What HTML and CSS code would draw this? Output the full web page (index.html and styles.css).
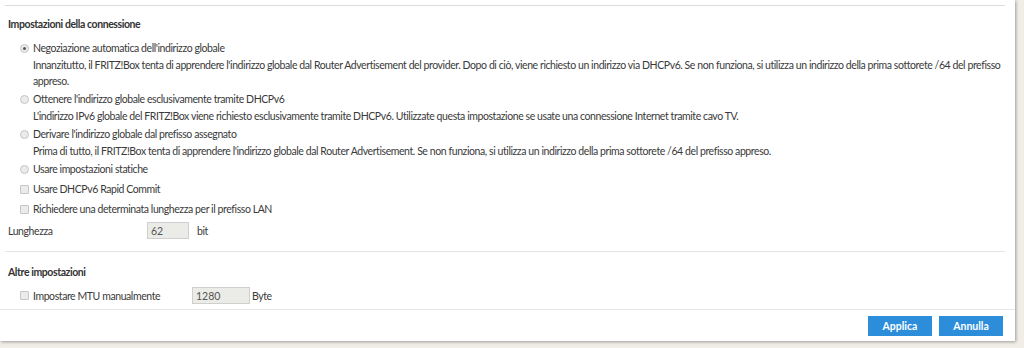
FILE: index.html
```html
<!DOCTYPE html>
<html>

<head>
    <meta charset="utf-8">
    <link rel="stylesheet" href="styles.css">
</head>

<body>
    <div class="panel">
        <div class="content">
            <hr class="top_rule">

            <h4 class="section_title">Impostazioni della connessione</h4>

            <div class="option">
                <label class="choice"><span class="radio checked"></span>Negoziazione automatica dell'indirizzo globale</label>
                <p class="hint">Innanzitutto, il FRITZ!Box tenta di apprendere l'indirizzo globale dal Router Advertisement del provider. Dopo di ciò, viene richiesto un indirizzo via DHCPv6. Se non funziona, si utilizza un indirizzo della prima sottorete /64 del prefisso appreso.</p>
            </div>
            <div class="option">
                <label class="choice"><span class="radio"></span>Ottenere l'indirizzo globale esclusivamente tramite DHCPv6</label>
                <p class="hint">L'indirizzo IPv6 globale del FRITZ!Box viene richiesto esclusivamente tramite DHCPv6. Utilizzate questa impostazione se usate una connessione Internet tramite cavo TV.</p>
            </div>
            <div class="option">
                <label class="choice"><span class="radio"></span>Derivare l'indirizzo globale dal prefisso assegnato</label>
                <p class="hint">Prima di tutto, il FRITZ!Box tenta di apprendere l'indirizzo globale dal Router Advertisement. Se non funziona, si utilizza un indirizzo della prima sottorete /64 del prefisso appreso.</p>
            </div>
            <div class="option">
                <label class="choice"><span class="radio"></span>Usare impostazioni statiche</label>
            </div>
            <div class="option">
                <label class="choice"><span class="check"></span>Usare DHCPv6 Rapid Commit</label>
            </div>
            <div class="option">
                <label class="choice"><span class="check"></span>Richiedere una determinata lunghezza per il prefisso LAN</label>
            </div>
            <div class="field_row">
                <span class="field_label">Lunghezza</span>
                <input class="field_input short" type="text" value="62" disabled>
                <span class="unit">bit</span>
            </div>

            <hr class="mid_rule">

            <h4 class="section_title other_title">Altre impostazioni</h4>
            <div class="field_row mtu_row">
                <label class="choice mtu_label"><span class="check"></span>Impostare MTU manualmente</label>
                <input class="field_input wide" type="text" value="1280" disabled>
                <span class="unit">Byte</span>
            </div>
        </div>

        <div class="footer">
            <button class="base_button">Applica</button>
            <button class="base_button">Annulla</button>
        </div>
    </div>
</body>

</html>
```

FILE: styles.css
```css
html,
body {
    margin: 0;
    padding: 0;
    background: #f1ede7;
}

body {
    font-family: "Lato", "Liberation Sans", sans-serif;
    font-size: 10.5px;
    letter-spacing: -0.42px;
    color: #3a3a3a;
    width: 1024px;
    height: 348px;
    overflow: hidden;
}

.panel {
    width: 1015px;
    height: 341px;
    background: #fff;
    box-shadow: 1px 1px 3px rgba(0, 0, 0, 0.35);
    display: flex;
    flex-direction: column;
}

.content {
    padding: 0 2px 0 8px;
    flex: 1;
}

.top_rule {
    border: none;
    border-top: 1px solid #dcdcdc;
    margin: 5px 0 0 -3px;
    width: 1000px;
}

.mid_rule {
    border: none;
    border-top: 1px solid #e2e2e2;
    margin: 12px 0 0 -3px;
    width: 1000px;
}

.section_title {
    font-size: 10.5px;
    font-weight: bold;
    color: #333;
    margin: 11px 0 10px 0;
    line-height: 14px;
}

.other_title {
    margin: 13px 0 8px 0;
}

.option {
    padding-left: 12px;
    margin-bottom: 6px;
}

.choice {
    display: flex;
    align-items: center;
    line-height: 14px;
}

.radio,
.check {
    display: inline-block;
    width: 7px;
    height: 7px;
    border: 1px solid #c6c6c6;
    background: #ebebeb;
    margin-right: 4px;
    flex: none;
    position: relative;
}

.radio {
    border-radius: 50%;
}

.radio.checked::after {
    content: "";
    position: absolute;
    left: 2px;
    top: 2px;
    width: 3px;
    height: 3px;
    border-radius: 50%;
    background: #555;
}

.check {
    border-radius: 1px;
}

.hint {
    margin: 2px 0 -3px 0;
    padding-left: 13px;
    line-height: 16px;
}

.field_row {
    display: flex;
    align-items: center;
}

.field_label {
    width: 139px;
}

.field_input {
    font-family: inherit;
    font-size: 10.5px;
    color: #555;
    background: #ebebe8;
    border: 1px solid #cfcfcf;
    padding: 0 3px;
    box-sizing: border-box;
    height: 17px;
}

.short {
    width: 42px;
    margin-right: 8px;
}

.wide {
    width: 58px;
    margin-right: 2px;
}

.mtu_row {
    padding-left: 12px;
}

.mtu_label {
    width: 172px;
}

.footer {
    border-top: 1px solid #e6e6e6;
    height: 31px;
    display: flex;
    justify-content: flex-end;
    align-items: center;
    gap: 7px;
    padding-right: 12px;
}

.base_button {
    border: none;
    height: 20px;
    width: 64px;
    background: #2c8ddb;
    color: white;
    font-family: inherit;
    font-size: 10.5px;
    font-weight: bold;
    padding: 0;
}
```
